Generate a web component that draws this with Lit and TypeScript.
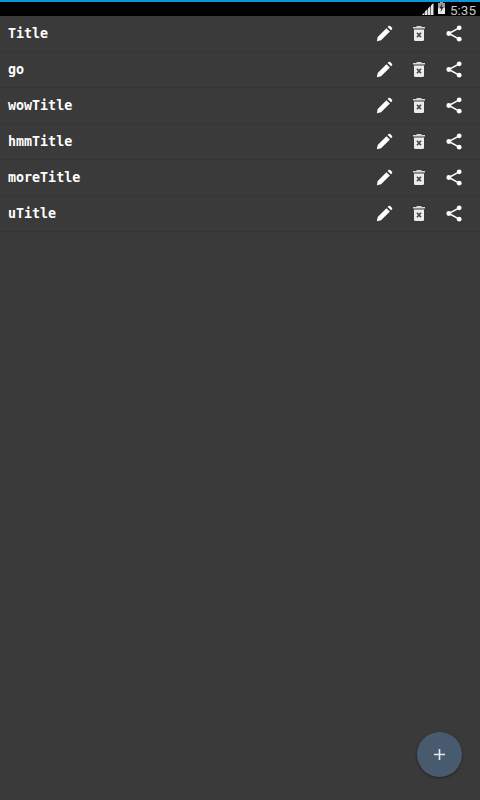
import { LitElement, html, css } from "lit";
import { customElement } from "lit/decorators.js";

const titles = ["Title", "go", "wowTitle", "hmmTitle", "moreTitle", "uTitle"];

@customElement("app-root")
export class AppRoot extends LitElement {
  static styles = css`
    :host { display: flex; flex-direction: column; width: 480px; height: 800px; background: #3a3a3a; position: relative; overflow: hidden; font-family: "Liberation Mono", monospace; }
    .status { height: 14px; background: #000; border-top: 2px solid #0f94d4; display: flex; align-items: center; justify-content: flex-end; flex: none; }
    .time { font: 13.5px "Roboto", sans-serif; color: #c8c8c8; width: 26px; margin-left: 5px; margin-right: 4px; line-height: 14px; padding-top: 1px; }
    .status svg { display: block; }
    .signal { margin-top: -1px; }
    .batt { margin-left: 4px; margin-top: -3px; }
    .row { height: 35px; border-bottom: 1px solid #343434; display: flex; align-items: center; padding-left: 8px; flex: none; }
    .title { flex: 1; color: #fff; font: 700 13.33px "DejaVu Sans Mono", monospace; }
    .icons { display: flex; margin-right: 8.5px; }
    .ic { width: 35px; height: 35px; display: flex; align-items: center; justify-content: center; }
    .ic svg { display: block; filter: blur(0.35px); }
    .fab { position: absolute; left: 417px; top: 732px; width: 45px; height: 45px; border-radius: 50%; background: #475a6e; box-shadow: 0 1px 3px rgba(0,0,0,.4); display: flex; align-items: center; justify-content: center; }
  `;

  pencil() {
    return html`<svg width="17" height="17" viewBox="0 0 20 20">
      <path fill="#fff" d="M1 19l1-5L12.300 3.700l4 4L6 18z"/>
      <path fill="#fff" d="M13.700 2.300l1-1a1.500 1.500 0 0 1 2.100 0l1.900 1.900a1.500 1.500 0 0 1 0 2.100l-1 1z"/>
    </svg>`;
  }
  trash() {
    return html`<svg width="12" height="15" viewBox="0 0 12 15">
      <path fill="#d8d8d8" d="M3.500 0h5v1H12v1.400H0V1h3.500z"/>
      <path fill="#ececec" d="M1 3.400h10v10.100a1.500 1.500 0 0 1-1.500 1.500h-7A1.500 1.500 0 0 1 1 13.500z"/>
      <path stroke="#4a4a4a" stroke-width="1.700" d="M4 6.700l4 4.600M8 6.700l-4 4.600"/>
    </svg>`;
  }
  share() {
    return html`<svg width="16" height="17" viewBox="0 0 16 17">
      <g fill="#fff"><circle cx="13.200" cy="2.800" r="2.400"/><circle cx="13.200" cy="14.200" r="2.400"/><circle cx="2.800" cy="8.500" r="2.400"/></g>
      <path stroke="#fff" stroke-width="1.500" fill="none" d="M13.200 2.800L2.800 8.500l10.400 5.700"/>
    </svg>`;
  }

  render() {
    return html`
      <div class="status">
        <svg class="signal" width="12" height="12" viewBox="0 0 12 12">
          <path fill="#6e6e6e" d="M0 12L12 0v12z"/>
          <path fill="#e4e4e4" d="M0 12l2-2v2zM3 12V8.500l2-2V12zM6 12V5.500l2-2V12zM9 12V2.500l2-2V12z"/>
        </svg>
        <svg class="batt" width="7" height="12" viewBox="0 0 7 12">
          <path fill="#9a9a9a" d="M2 0h3v1h2v11H0V1h2z"/>
          <path fill="#e8e8e8" d="M0 6h7v6H0z"/>
          <path fill="#222" d="M4.200 1.500L1.500 6.500h1.800L2.500 10.500 5.500 5H3.700z"/>
        </svg>
        <span class="time">5:35</span>
      </div>
      ${titles.map(
        (t) => html`<div class="row">
          <span class="title">${t}</span>
          <div class="icons">
            <span class="ic">${this.pencil()}</span>
            <span class="ic">${this.trash()}</span>
            <span class="ic">${this.share()}</span>
          </div>
        </div>`
      )}
      <div class="fab">
        <svg width="11" height="11" viewBox="0 0 11 11"><path stroke="#e8ebee" stroke-width="1.600" d="M5.500 0v11M0 5.500h11"/></svg>
      </div>
    `;
  }
}
